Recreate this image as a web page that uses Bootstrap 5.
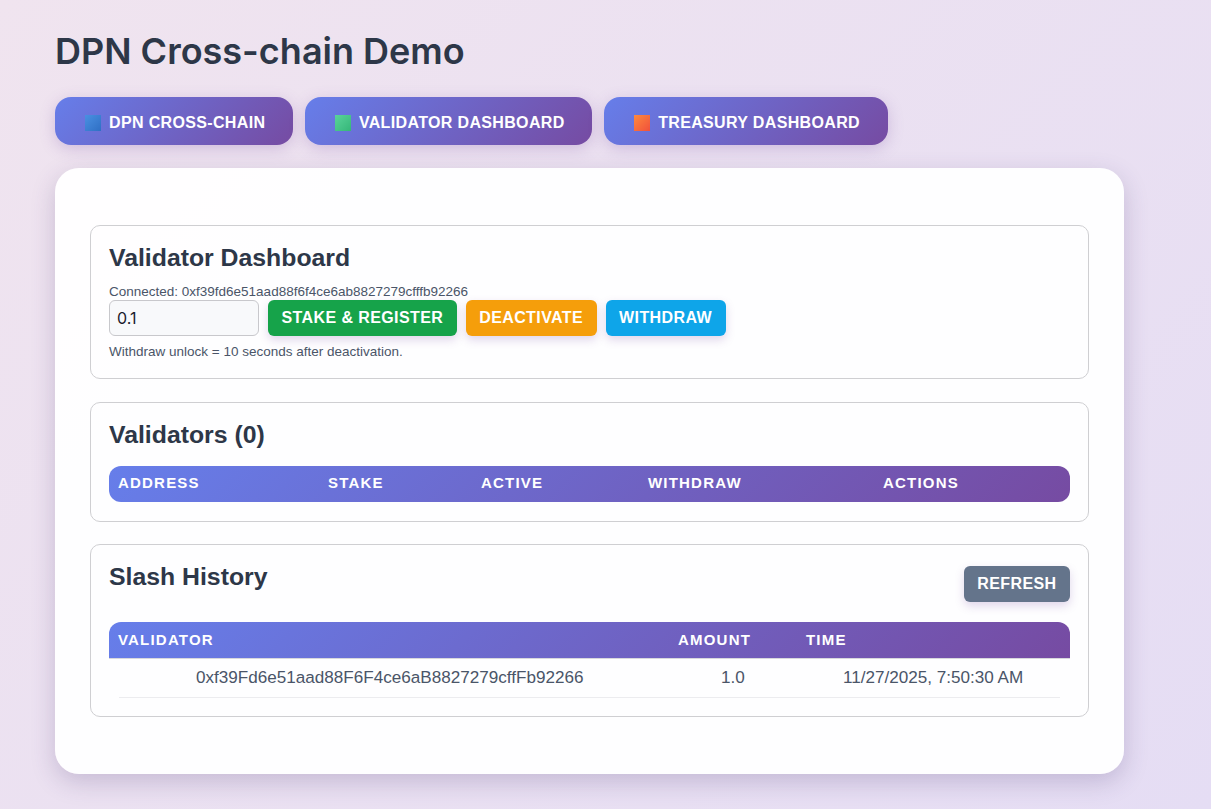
<!DOCTYPE html>
<html lang="en">
<head>
    <meta charset="UTF-8">
    <meta name="viewport" content="width=device-width, initial-scale=1.0">
    <title>DPN Cross-chain Demo</title>
    <link rel="stylesheet" href="https://cdn.jsdelivr.net/npm/bootstrap@5.3.0/dist/css/bootstrap.min.css">
    <style>
        body {
            background: linear-gradient(135deg, #f0e4ef 0%, #e5ddf4 100%);
            min-height: 809px;
            font-family: "Liberation Sans", Arial, sans-serif;
            color: #2d3748;
        }
        .page-wrap { padding: 30px 87px 35px 55px; }
        .page-title {
            font-family: Inter, sans-serif;
            font-size: 36px;
            font-weight: 600;
            line-height: 42px;
            margin-bottom: 25px;
            color: #2d3748;
        }
        .tab-row { gap: 12px; margin-bottom: 23px; }
        .tab-btn {
            height: 48px;
            padding: 3px 27.5px 0 30px;
            border: 0;
            border-radius: 16px;
            background: linear-gradient(135deg, #667eea, #764ba2);
            color: #fff;
            font-size: 16px;
            font-weight: 700;
            text-transform: uppercase;
            letter-spacing: .35px;
            box-shadow: 0 4px 15px rgba(118, 75, 162, .25);
        }
        .sq { width: 16px; height: 16px; margin-right: 8px; display: inline-block; }
        .sq-blue { background: linear-gradient(135deg, #4a90e2, #2f6fc4); }
        .sq-green { background: linear-gradient(135deg, #5ad49b, #35b678); }
        .sq-red { background: linear-gradient(135deg, #ff8a3c, #f0503c); }
        .main-panel {
            background: rgba(255, 255, 255, .95);
            border-radius: 24px;
            padding: 57px 35px;
            box-shadow: 0 8px 24px rgba(70, 50, 110, .22);
            height: 606px;
        }
        .box {
            border: 1px solid #cfcfd2;
            border-radius: 10px;
            padding: 18px;
            margin-bottom: 22.5px;
        }
        .box:last-child { margin-bottom: 0; }
        .box-title { font-size: 24.8px; font-weight: 700; line-height: 28px; margin: 0; color: #2d3748; }
        .title-dash { margin-bottom: 12px; }
        .title-list { margin-bottom: 17px; }
        .note { font-size: 13.5px; line-height: 16px; color: #4a5568; }
        .form-line { gap: 9px; }
        .amount-input {
            width: 150px;
            height: 36px;
            padding: 4px 7px;
            font-family: Inter, sans-serif;
            font-size: 16px;
            background: #f8f9fb;
            border: 1px solid #c8c8cc;
            border-radius: 6px;
            color: #1a202c;
        }
        .act-btn {
            height: 36px;
            border: 0;
            border-radius: 6px;
            padding: 0 13.5px;
            color: #fff;
            font-size: 16px;
            font-weight: 700;
            text-transform: uppercase;
            letter-spacing: .4px;
            box-shadow: 0 4px 10px rgba(118, 75, 162, .22);
        }
        .act-green { background: #16a34a; }
        .act-amber { background: #f59e0b; }
        .act-sky { background: #0ea5e9; }
        .act-slate { background: #64748b; margin-top: 3px; }
        .slash-top { margin-bottom: 20px; }
        .grad-head {
            height: 36px;
            padding: 0 9px;
            background: linear-gradient(135deg, #667eea, #764ba2);
            color: #fff;
            font-size: 15px;
            font-weight: 700;
            text-transform: uppercase;
            letter-spacing: 1.2px;
        }
        .head-round { border-radius: 12px; margin-bottom: 1px; }
        .head-top { border-radius: 12px 12px 0 0; }
        .th-address { width: 210px; }
        .th-stake { width: 153px; }
        .th-active { width: 167px; }
        .th-withdraw { width: 235px; }
        .th-validator { width: 560px; }
        .th-amount { width: 128px; }
        .row-line { height: 40px; border-top: 1px solid #d8d8dc; padding: 0 10px; }
        .row-inner { height: 39px; border-bottom: 1px solid #ececef; font-size: 17.1px; color: #4a5568; }
        .cell-val { width: 540px; padding-left: 77px; }
        .cell-amt { width: 148px; padding-left: 62px; }
        .cell-time { padding-left: 36px; }
    </style>
</head>
<body>
    <div class="page-wrap">
        <h1 class="page-title">DPN Cross-chain Demo</h1>
        <div class="d-flex tab-row">
            <button class="tab-btn d-flex align-items-center"><span class="sq sq-blue"></span>DPN Cross-chain</button>
            <button class="tab-btn d-flex align-items-center"><span class="sq sq-green"></span>Validator Dashboard</button>
            <button class="tab-btn d-flex align-items-center"><span class="sq sq-red"></span>Treasury Dashboard</button>
        </div>
        <div class="main-panel">
            <section class="box">
                <h2 class="box-title title-dash">Validator Dashboard</h2>
                <div class="note">Connected: 0xf39fd6e51aad88f6f4ce6ab8827279cfffb92266</div>
                <div class="d-flex align-items-center form-line">
                    <input class="amount-input" value="0.1">
                    <button class="act-btn act-green">Stake &amp; Register</button>
                    <button class="act-btn act-amber">Deactivate</button>
                    <button class="act-btn act-sky">Withdraw</button>
                </div>
                <div class="note mt-2">Withdraw unlock = 10 seconds after deactivation.</div>
            </section>
            <section class="box">
                <h2 class="box-title title-list">Validators (0)</h2>
                <div class="grad-head head-round d-flex align-items-center">
                    <span class="th-address">Address</span>
                    <span class="th-stake">Stake</span>
                    <span class="th-active">Active</span>
                    <span class="th-withdraw">Withdraw</span>
                    <span>Actions</span>
                </div>
            </section>
            <section class="box">
                <div class="d-flex justify-content-between align-items-start slash-top">
                    <h2 class="box-title">Slash History</h2>
                    <button class="act-btn act-slate">Refresh</button>
                </div>
                <div class="grad-head head-top d-flex align-items-center">
                    <span class="th-validator">Validator</span>
                    <span class="th-amount">Amount</span>
                    <span>Time</span>
                </div>
                <div class="row-line">
                    <div class="row-inner d-flex align-items-center">
                        <span class="cell-val">0xf39Fd6e51aad88F6F4ce6aB8827279cffFb92266</span>
                        <span class="cell-amt">1.0</span>
                        <span class="cell-time">11/27/2025, 7:50:30 AM</span>
                    </div>
                </div>
            </section>
        </div>
    </div>
    <script src="https://cdn.jsdelivr.net/npm/bootstrap@5.3.0/dist/js/bootstrap.bundle.min.js"></script>
</body>
</html>
